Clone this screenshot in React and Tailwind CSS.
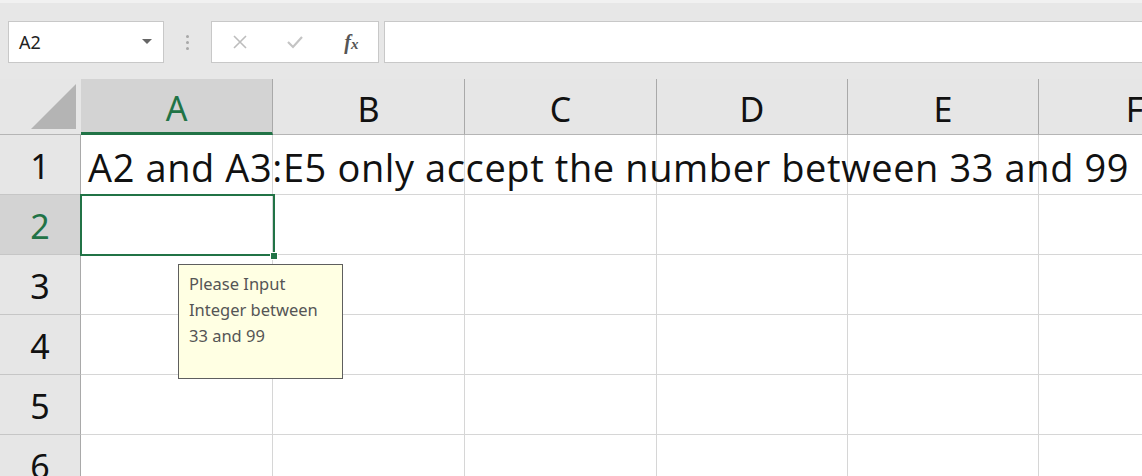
import React from "react";

const cols = [
  { key: "A", w: "w-[192px]" },
  { key: "B", w: "w-[192px]" },
  { key: "C", w: "w-[192px]" },
  { key: "D", w: "w-[191px]" },
  { key: "E", w: "w-[191px]" },
  { key: "F", w: "w-[192px]" },
];

const rows = [1, 2, 3, 4, 5, 6];

const headFont = { fontFamily: '"Noto Sans", "Liberation Sans", sans-serif' };
const cellFont = { fontFamily: '"Open Sans", "Liberation Sans", sans-serif' };

const App = () => {
  return (
    <div className="w-[1142px] h-[476px] overflow-hidden bg-white relative" style={cellFont}>
      {/* Formula bar */}
      <div className="h-[79px] bg-[#e7e7e7] border-t-[3px] border-[#f1f1f1] flex items-start pt-[18px] pl-[8px]">
        <div className="w-[156px] h-[42px] bg-white border border-[#c8c8c8] flex items-center justify-between pl-[10px] pr-[11px]">
          <span className="text-[18px] text-[#222]" style={headFont}>A2</span>
          <svg width="10" height="6" viewBox="0 0 10 6">
            <path d="M0 0 L10 0 L5 5 Z" fill="#666" />
          </svg>
        </div>
        <div className="w-[47px] h-[42px] flex flex-col items-center justify-center gap-[3px]">
          <span className="w-[3px] h-[3px] rounded-full bg-[#a8a8a8]" />
          <span className="w-[3px] h-[3px] rounded-full bg-[#a8a8a8]" />
          <span className="w-[3px] h-[3px] rounded-full bg-[#a8a8a8]" />
        </div>
        <div className="w-[168px] h-[42px] bg-white border border-[#c8c8c8] flex items-center">
          <div className="w-[56px] flex justify-center">
            <svg width="16" height="16" viewBox="0 0 16 16">
              <path d="M2 2 L14 14 M14 2 L2 14" stroke="#bdbdbd" strokeWidth="1.6" fill="none" />
            </svg>
          </div>
          <div className="w-[56px] flex justify-center">
            <svg width="18" height="16" viewBox="0 0 18 16">
              <path d="M2 8 L7 13 L16 3" stroke="#c4c4c4" strokeWidth="2.2" fill="none" />
            </svg>
          </div>
          <div className="w-[56px] flex justify-center pl-[2px]">
            <span className="italic font-bold text-[20px] text-[#555] leading-none" style={{ fontFamily: '"Liberation Serif", serif' }}>
              f<span className="text-[15px]">x</span>
            </span>
          </div>
        </div>
        <div className="ml-[5px] flex-1 h-[42px] bg-white border border-[#c8c8c8] border-r-0" />
      </div>

      {/* Sheet */}
      <div className="relative">
        {/* Column headers */}
        <div className="flex h-[56px] bg-[#e6e6e6]">
          <div className="w-[81px] shrink-0 border-b border-[#b5b5b5] flex items-end justify-end pr-[5px] pb-[5px]">
            <svg width="45" height="45" viewBox="0 0 45 45">
              <path d="M45 0 L45 45 L0 45 Z" fill="#b4b4b4" />
            </svg>
          </div>
          {cols.map((c) => (
            <div
              key={c.key}
              className={`${c.w} shrink-0 flex items-center justify-center text-[34px] pt-[5px] border-r border-[#a9a9a9] ${
                c.key === "A"
                  ? "bg-[#d3d3d3] text-[#217346] border-b-[3px] border-b-[#217346]"
                  : "text-[#111] border-b border-b-[#b5b5b5]"
              }`}
              style={headFont}
            >
              {c.key}
            </div>
          ))}
        </div>

        {/* Rows */}
        {rows.map((r) => (
          <div key={r} className="flex h-[60px]">
            <div
              className={`w-[81px] shrink-0 flex items-center justify-center text-[34px] pt-[3px] border-r border-r-[#a9a9a9] border-b border-b-[#c6c6c6] ${
                r === 2 ? "bg-[#d3d3d3] text-[#217346]" : "bg-[#e6e6e6] text-[#111]"
              }`}
              style={headFont}
            >
              {r}
            </div>
            {cols.map((c) => (
              <div
                key={c.key}
                className={`${c.w} shrink-0 border-r border-b border-[#d6d6d6] ${
                  r === 1 && c.key === "A" ? "relative overflow-visible" : ""
                }`}
              >
                {r === 1 && c.key === "A" && (
                  <span className="absolute left-[7px] top-[7px] whitespace-nowrap text-[38px] tracking-[0.6px] text-[#111] leading-[50px]">
                    A2 and A3:E5 only accept the number between 33 and 99
                  </span>
                )}
              </div>
            ))}
          </div>
        ))}

        {/* Selection on A2 */}
        <div className="absolute left-[80px] top-[115px] w-[195px] h-[62px] border-2 border-[#217346]" />
        <div className="absolute left-[270px] top-[173px] w-[8px] h-[8px] bg-[#217346] border border-white" />

        {/* Input message tooltip */}
        <div className="absolute left-[178px] top-[185px] w-[165px] h-[115px] bg-[#ffffe3] border border-[#5e5e5e] pl-[10px] pt-[6px]">
          <p className="text-[16.5px] leading-[26px] text-[#555]" style={headFont}>
            Please Input
            <br />
            Integer between
            <br />
            33 and 99
          </p>
        </div>
      </div>
    </div>
  );
};

export default App;
